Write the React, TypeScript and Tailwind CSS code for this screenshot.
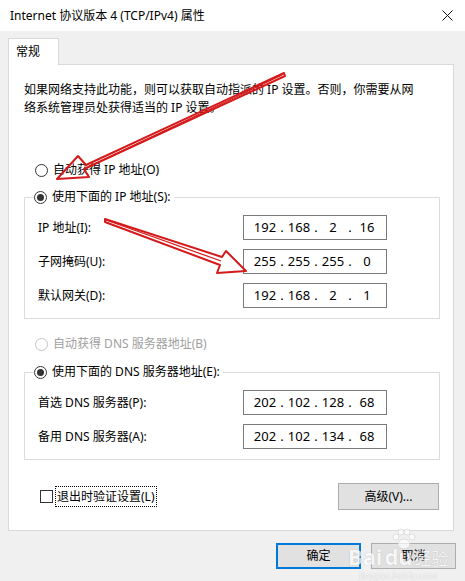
import React from "react";

const ff = "font-['Noto_Sans','Noto_Sans_CJK_SC',sans-serif]";

function Radio({ checked, disabled }: { checked?: boolean; disabled?: boolean }) {
  return (
    <span
      className={`inline-flex h-[13px] w-[13px] items-center justify-center rounded-full border bg-white ${
        disabled ? "border-[#c4c4c4]" : "border-[#333333]"
      }`}
    >
      {checked && <span className="h-[7px] w-[7px] rounded-full bg-[#333333]" />}
    </span>
  );
}

function IpBox({ parts }: { parts: string[] }) {
  return (
    <div className="flex h-[25px] w-[144px] items-center border border-[#7a7a7a] bg-white pl-[8px] text-[13px] text-black">
      {parts.map((p, i) => (
        <React.Fragment key={i}>
          <span className="w-[26px] text-center">{p}</span>
          {i < 3 && <span className="w-[8px] text-center">.</span>}
        </React.Fragment>
      ))}
    </div>
  );
}

function Row({ label, parts }: { label: string; parts: string[] }) {
  return (
    <div className="flex h-[25px] items-center">
      <span className="w-[205px]">{label}</span>
      <IpBox parts={parts} />
    </div>
  );
}

function Group({ legend, children }: { legend: string; children: React.ReactNode }) {
  return (
    <fieldset className="ml-[15px] mr-[13px] border border-[#dcdcdc] pb-[10px] pl-[13px]">
      <legend className="-ml-[4px] flex h-[16px] items-center gap-[5px] bg-white pr-[3px]">
        <Radio checked />
        <span>{legend}</span>
      </legend>
      <div className="mt-[10px] flex flex-col gap-[9px]">{children}</div>
    </fieldset>
  );
}

export default function App() {
  return (
    <div className={`relative h-[581px] w-[465px] overflow-hidden bg-[#f0f0f0] text-[12px] text-black ${ff}`}>
      {/* title bar */}
      <div className="flex h-[31px] items-center justify-between bg-white pl-[10px] pr-[11px]">
        <span className="text-[12px]">Internet 协议版本 4 (TCP/IPv4) 属性</span>
        <svg width="11" height="11" viewBox="0 0 11 11" className="mr-[1px]">
          <path d="M0.5 0.5 L10.5 10.5 M10.5 0.5 L0.5 10.5" stroke="#111" strokeWidth="1" />
        </svg>
      </div>

      <div className="px-[8px] pt-[7px]">
        {/* tab */}
        <div className="relative z-10 -mb-px flex h-[27px] w-[51px] items-center border border-b-0 border-[#d9d9d9] bg-white pl-[7px]">
          常规
        </div>

        {/* panel */}
        <div className="h-[467px] w-[446px] border border-[#d9d9d9] bg-white">
          <p className="pl-[15px] pr-[20px] pt-[16px] leading-[18px]">
            如果网络支持此功能，则可以获取自动指派的 IP 设置。否则，你需要从网
            <br />
            络系统管理员处获得适当的 IP 设置。
          </p>

          <div className="ml-[26px] mt-[45px] flex h-[16px] items-center gap-[5px]">
            <Radio />
            <span>自动获得 IP 地址(O)</span>
          </div>

          <div className="mt-[11px]">
            <Group legend="使用下面的 IP 地址(S):">
              <Row label="IP 地址(I):" parts={["192", "168", "2", "16"]} />
              <Row label="子网掩码(U):" parts={["255", "255", "255", "0"]} />
              <Row label="默认网关(D):" parts={["192", "168", "2", "1"]} />
            </Group>
          </div>

          <div className="ml-[26px] mt-[17px] flex h-[16px] items-center gap-[5px] text-[#a0a0a0]">
            <Radio disabled />
            <span>自动获得 DNS 服务器地址(B)</span>
          </div>

          <div className="mt-[12px]">
            <Group legend="使用下面的 DNS 服务器地址(E):">
              <Row label="首选 DNS 服务器(P):" parts={["202", "102", "128", "68"]} />
              <Row label="备用 DNS 服务器(A):" parts={["202", "102", "134", "68"]} />
            </Group>
          </div>

          <div className="ml-[31px] mr-[14px] mt-[23px] flex h-[27px] items-center justify-between">
            <div className="flex items-center gap-[2px]">
              <span className="h-[13px] w-[13px] border border-[#333333] bg-white" />
              <span className="border border-dotted border-black px-px leading-[19px]">退出时验证设置(L)</span>
            </div>
            <button className="h-[27px] w-[101px] border border-[#adadad] bg-[#e1e1e1]">高级(V)...</button>
          </div>
        </div>

        {/* dialog buttons */}
        <div className="mt-[12px] flex justify-end gap-[10px] pr-px">
          <button className="h-[26px] w-[85px] border-2 border-[#0078d7] bg-[#e1e1e1]">确定</button>
          <button className="h-[26px] w-[85px] border border-[#adadad] bg-[#e1e1e1]">取消</button>
        </div>
      </div>

      {/* red annotation arrows */}
      <svg className="pointer-events-none absolute left-0 top-0" width="465" height="581" viewBox="0 0 465 581">
        <g fill="none" stroke="#d41a1a" strokeWidth="2" strokeLinejoin="round">
          <path d="M284 73 L86 165 L78 156 L57 179 L89 177 L84 169 L285 76 Z" />
          <path d="M282 75 L88 167" strokeWidth="1.2" />
          <path d="M105 219 L222 257 L226 251 L246 271 L217 273 L220 265 L105 222 Z" />
          <path d="M106 220 L221 261" strokeWidth="1.2" />
        </g>
      </svg>

      {/* watermark */}
      <div className="pointer-events-none absolute left-[348px] top-[528px] flex flex-col items-center text-white opacity-70">
        <svg width="26" height="22" viewBox="0 0 26 22" className="ml-[10px]">
          <g fill="#ffffff" stroke="#cfcfcf" strokeWidth="0.8">
            <circle cx="6" cy="9" r="3" />
            <circle cx="11" cy="4" r="3" />
            <circle cx="17" cy="4" r="3" />
            <circle cx="22" cy="9" r="3" />
            <ellipse cx="14" cy="16" rx="6" ry="5" />
          </g>
        </svg>
        <div className="-mt-[6px] flex items-baseline text-[22px] font-bold leading-[24px] [text-shadow:0_0_1px_#9a9a9a]">
          <span>Bai</span>
          <span className="ml-[2px]">du</span>
          <span className="ml-[2px] text-[17px] font-normal">经验</span>
        </div>
        <span className="text-[9px] leading-[10px] [text-shadow:0_0_1px_#9a9a9a]">jingyan.baidu.com</span>
      </div>
    </div>
  );
}
